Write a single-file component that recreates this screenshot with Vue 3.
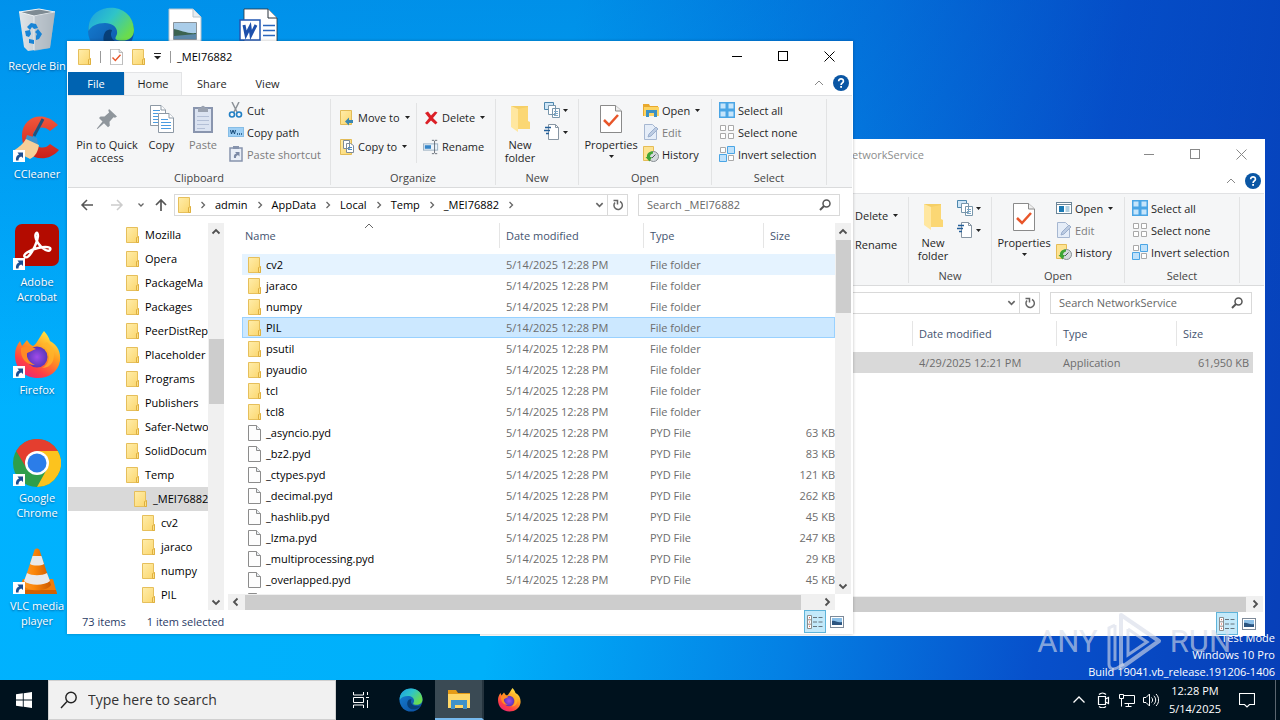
<script setup>
const shortcuts = [
  { icon: 'bin', label: 'Recycle Bin', row: 1, col: 1 },
  { icon: 'edge', label: '', row: 1, col: 2 },
  { icon: 'picture', label: '', row: 1, col: 3 },
  { icon: 'word', label: '', row: 1, col: 4 },
  { icon: 'ccleaner', label: 'CCleaner', row: 2, col: 1, link: true },
  { icon: 'acrobat', label: 'Adobe Acrobat', row: 3, col: 1, link: true },
  { icon: 'firefox', label: 'Firefox', row: 4, col: 1, link: true },
  { icon: 'chrome', label: 'Google Chrome', row: 5, col: 1, link: true },
  { icon: 'vlc', label: 'VLC media player', row: 6, col: 1, link: true },
]

const tree = [
  ['Mozilla', 0], ['Opera', 0], ['PackageMa', 0], ['Packages', 0],
  ['PeerDistRep', 0], ['Placeholder', 0], ['Programs', 0], ['Publishers', 0],
  ['Safer-Netwo', 0], ['SolidDocum', 0], ['Temp', 0], ['_MEI76882', 1],
  ['cv2', 2], ['jaraco', 2], ['numpy', 2], ['PIL', 2],
]

const stamp = '5/14/2025 12:28 PM'
const folders = ['cv2', 'jaraco', 'numpy', 'PIL', 'psutil', 'pyaudio', 'tcl', 'tcl8']
  .map((name) => ({ name, date: stamp, type: 'File folder', size: '', icon: 'folder' }))
const files = [
  ['_asyncio.pyd', 63], ['_bz2.pyd', 83], ['_ctypes.pyd', 121], ['_decimal.pyd', 262],
  ['_hashlib.pyd', 45], ['_lzma.pyd', 247], ['_multiprocessing.pyd', 29], ['_overlapped.pyd', 45],
].map(([name, kb]) => ({ name, date: stamp, type: 'PYD File', size: kb + ' KB', icon: 'file' }))

const windows = [
  {
    id: 'network', active: false, title: 'NetworkService', crumbs: [],
    rows: [{ name: '', date: '4/29/2025 12:21 PM', type: 'Application', size: '61,950 KB', icon: '', state: 'dim' }],
  },
  {
    id: 'mei', active: true, title: '_MEI76882',
    crumbs: ['admin', 'AppData', 'Local', 'Temp', '_MEI76882'],
    rows: [
      ...folders.map((f) => ({ ...f, state: f.name === 'cv2' ? 'hover' : f.name === 'PIL' ? 'picked' : '' })),
      ...files,
      { name: '', date: '', type: '', size: '', icon: 'file' },
    ],
  },
]
</script>

<template>
  <svg class="sprite" aria-hidden="true">
    <defs>
      <linearGradient id="gFolder" x1="0" x2="1" y1="0" y2="1">
        <stop offset="0" stop-color="#ffedab" /><stop offset="1" stop-color="#fbd66c" />
      </linearGradient>
      <linearGradient id="gEdgeA" x1="0" x2="1" y1="0" y2="0.6">
        <stop offset="0" stop-color="#1b9de2" /><stop offset="0.5" stop-color="#2fc4c8" /><stop offset="1" stop-color="#6bdc4c" />
      </linearGradient>
      <linearGradient id="gEdgeB" x1="0" x2="1" y1="0" y2="1">
        <stop offset="0" stop-color="#1583d8" /><stop offset="1" stop-color="#0c4a9a" />
      </linearGradient>
      <linearGradient id="gFox" x1="0.8" x2="0.2" y1="0" y2="1">
        <stop offset="0" stop-color="#fff04a" /><stop offset="0.4" stop-color="#ff9a1f" /><stop offset="0.75" stop-color="#ff3f45" /><stop offset="1" stop-color="#e6237d" />
      </linearGradient>
      <radialGradient id="gGlobe"><stop offset="0" stop-color="#a04bea" /><stop offset="1" stop-color="#5a36b8" /></radialGradient>
      <linearGradient id="gBin" x1="0" x2="1"><stop offset="0" stop-color="#dfe5e9" /><stop offset="0.6" stop-color="#c4ccd2" /><stop offset="1" stop-color="#97a3ac" /></linearGradient>
      <linearGradient id="gCone" x1="0" x2="1"><stop offset="0" stop-color="#ff9a2b" /><stop offset="0.4" stop-color="#fb8608" /><stop offset="1" stop-color="#cc5a00" /></linearGradient>
      <linearGradient id="gRed" x1="0" x2="0" y1="0" y2="1"><stop offset="0" stop-color="#f2573c" /><stop offset="1" stop-color="#c91f1a" /></linearGradient>
    </defs>

    <symbol id="folder" viewBox="0 0 13 16">
      <path d="M.5 .5H11.5V9l1 1v5.5H.5Z" fill="url(#gFolder)" stroke="#e6bf5b" />
      <path d="M12.5 9.500v6h-2v-5Z" fill="#fbe08b" stroke="#dfb03f" />
    </symbol>
    <symbol id="file" viewBox="0 0 13 16">
      <path d="M.5 .5H8.500L12.500 4.500V15.500H.5Z" fill="#fdfdfd" stroke="#8c8c8c" />
      <path d="M8.500 .5V4.500H12.500" fill="#e9eef2" stroke="#8c8c8c" />
    </symbol>
    <symbol id="checkdoc" viewBox="0 0 22 28">
      <path d="M.5 .5H15.500L21.500 6V27.500H.5Z" fill="#fff" stroke="#8a8a8a" />
      <path d="M15.500 .5V6H21.500" fill="#eee" stroke="#8a8a8a" />
      <path d="M4 15l5 5L18 10" fill="none" stroke="#e8562a" stroke-width="2.500" />
    </symbol>
    <symbol id="pin" viewBox="0 0 22 22">
      <path d="M13 1L21 8.500l-2 1.200-1.500-.4-4 4.500.3 4-1.800 1.400-4-4L1.500 21 .8 20.500 6.500 13.500 3 10l1.500-1.600 4 .2 4.600-4.200-.8-2Z" fill="#8f969c" />
    </symbol>
    <symbol id="copy" viewBox="0 0 24 28">
      <g fill="#fff" stroke="#8d99a5">
        <path d="M.5 .5H11L15.500 5V20.500H.5Z" /><path d="M11 .5V5h4.500" />
        <path d="M8.500 8.500H19L23.500 13V27.500H8.500Z" /><path d="M19 8.500V13h4.500" />
      </g>
      <path d="M3 5.500h7M3 8.500h5M3 11.500h5M3 14.500h5M3 17.500h5M11 14.500h7M11 17.500h10M11 20.500h10M11 23.500h10" stroke="#4b9ce0" />
    </symbol>
    <symbol id="paste" viewBox="0 0 20 28">
      <rect x="1" y="3" width="18" height="24" fill="#dbe3f1" stroke="#8995ae" stroke-width="2" />
      <path d="M5 3h3c0-3 4-3 4 0h3v4H5Z" fill="#9aa2b0" />
      <path d="M4 11.500h12M4 15.500h12M4 19.500h12M4 23.500h8" stroke="#b3bfd6" />
    </symbol>
    <symbol id="cut" viewBox="0 0 16 16">
      <path d="M4 0l5 10M11 0L6 10" stroke="#8c9298" stroke-width="1.500" />
      <ellipse cx="4" cy="12.500" rx="2.500" ry="2.500" fill="none" stroke="#217fc4" stroke-width="1.600" />
      <ellipse cx="11" cy="12.500" rx="2.500" ry="2.500" fill="none" stroke="#217fc4" stroke-width="1.600" />
    </symbol>
    <symbol id="path" viewBox="0 0 16 16">
      <rect x=".5" y="3.500" width="15" height="9" fill="#9fd0f5" stroke="#86bde6" />
      <path d="M2.500 6l1 4 1.500-4 1.500 4 1-4" fill="none" stroke="#174b79" />
      <path d="M9 10h1M11 10h1M13 10h1" stroke="#174b79" stroke-width="1.500" />
    </symbol>
    <symbol id="shortcut" viewBox="0 0 16 16">
      <rect x="2" y="2" width="12" height="13" fill="#e9eef7" stroke="#8794ad" stroke-width="1.500" />
      <rect x="5" y="0" width="6" height="3" fill="#8794ad" />
      <path d="M6 12c-.5-3 .5-4 2.500-4.500L7 6h4.500v4.500L10 9c-1.500 .5-2 1-2 3Z" fill="#7a88a5" />
    </symbol>
    <symbol id="move" viewBox="0 0 16 18">
      <path d="M1.500 1.500H12.500V15.500H1.500Z" fill="url(#gFolder)" stroke="#e2bb57" />
      <path d="M6 12.500l4-4v2.500h4v3h-4v2.500Z" fill="#3b87b0" />
    </symbol>
    <symbol id="copyto" viewBox="0 0 16 18">
      <path d="M1.500 1.500H12.500V16.500H1.500Z" fill="url(#gFolder)" stroke="#e2bb57" />
      <path d="M4.500 2.500h6v8h-6ZM7.500 5.500h4l3 2v7h-7Z" fill="#fff" stroke="#7f8c99" />
      <path d="M9 9.500h4M9 11.500h4" stroke="#4b8bc4" />
    </symbol>
    <symbol id="delete" viewBox="0 0 16 16">
      <path d="M2 3l3-1.500 3 4L12 1.500l2.500 1L10 8l4.500 4.500-2 2L8 10.500l-4 4-2-1.500L6 8Z" fill="#db1f26" />
    </symbol>
    <symbol id="rename" viewBox="0 0 18 16">
      <rect x=".5" y="4.500" width="16" height="7" fill="#eaf3fb" stroke="#94aabd" />
      <rect x="2" y="6" width="7" height="4" fill="#3585c8" />
      <path d="M10 .5h2.500M13.500 .5H16M13 1v14M10 15.500h2.500M13.500 15.500H16" stroke="#5d6670" />
    </symbol>
    <symbol id="bigfolder" viewBox="0 0 22 28">
      <path d="M2 1H19V21H2Z" fill="#f5cf66" />
      <path d="M2 1L9 4V27L2 22Z" fill="#ffe7a0" />
      <path d="M9 4l10-2v14l2 1v7H9Z" fill="#fbd774" />
    </symbol>
    <symbol id="newitem" viewBox="0 0 16 16">
      <path d="M.5 .5h9v7h-9Z" fill="#cfe6f7" stroke="#4d87ad" />
      <path d="M4.500 3.500h7v9h-7ZM8.500 6.500h7v9h-7Z" fill="#fff" stroke="#7896ab" />
      <path d="M10 9.500h4M10 11.500h4M10 13.500h4" stroke="#7ba7c7" />
    </symbol>
    <symbol id="easy" viewBox="0 0 16 16">
      <path d="M4.500 .5h7l3 3v12h-10Z" fill="#fff" stroke="#8896a3" />
      <path d="M11.500 .5v3h3" fill="none" stroke="#8896a3" />
      <path d="M1 3.500h6M0 6.500h6M2 9.500h3" stroke="#245f99" stroke-width="1.500" />
    </symbol>
    <symbol id="openfolder" viewBox="0 0 16 16">
      <path d="M0 2h6l1 2h8v10H0Z" fill="#e9a92e" /><path d="M1 5h15v9H1Z" fill="#fcd462" />
      <path d="M3 15V8h11v7h-3v-4H6v4Z" fill="#3c91c4" />
    </symbol>
    <symbol id="openapp" viewBox="0 0 16 16">
      <rect x=".5" y="2.500" width="15" height="11" fill="#fff" stroke="#6c8698" />
      <path d="M1 4.500h14" stroke="#6c8698" /><rect x="3" y="6" width="5" height="6" fill="#1c7ab4" />
      <path d="M9.500 7h4M9.500 9h4M9.500 11h4" stroke="#629fc3" />
    </symbol>
    <symbol id="edit" viewBox="0 0 16 16">
      <path d="M1.500 .5h8l4 4v11h-12Z" fill="#e5edf8" stroke="#a6b7d1" />
      <path d="M5 13l1-3 7-7 2 2-7 7Z" fill="#bdcce2" stroke="#9bafcd" />
    </symbol>
    <symbol id="history" viewBox="0 0 16 16">
      <path d="M.5 .5h10v14H.5Z" fill="#fde392" stroke="#e5bc57" />
      <circle cx="10.500" cy="10.500" r="5" fill="#d5dadd" stroke="#868d92" />
      <path d="M9 12l3.500-3.500" fill="none" stroke="#50595e" />
      <path d="M10 5.500C6 5 3.500 8 4 11L2.500 11 6.500 15.500 9 11H7c0-2 1-3 3-3.500Z" fill="#3fa535" />
    </symbol>
    <symbol id="selall" viewBox="0 0 16 16">
      <path d="M0 0h16v16H0Z" fill="#4aa5e5" />
      <path d="M1.500 1.500h5v5h-5ZM9.500 1.500h5v5h-5ZM1.500 9.500h5v5h-5ZM9.500 9.500h5v5h-5Z" fill="#c6e5fb" />
    </symbol>
    <symbol id="selnone" viewBox="0 0 16 16">
      <path d="M1.500 1.500h5v5h-5ZM9.500 1.500h5v5h-5ZM1.500 9.500h5v5h-5ZM9.500 9.500h5v5h-5Z" fill="#fff" stroke="#a9a9a9" />
    </symbol>
    <symbol id="selinv" viewBox="0 0 16 16">
      <path d="M1.500 1.500h5v5h-5ZM9.500 9.500h5v5h-5Z" fill="#fff" stroke="#a9a9a9" />
      <path d="M8.500 .5h7v7h-7ZM.5 8.500h7v7h-7Z" fill="#bfe1fa" stroke="#4aa5e5" />
    </symbol>
    <symbol id="help" viewBox="0 0 16 16">
      <circle cx="8" cy="8" r="8" fill="#0a56a4" />
      <path d="M5.700 6.200c0-3.200 4.800-3 4.700 0 0 1.700-2.300 1.700-2.300 3.800" fill="none" stroke="#fff" stroke-width="1.700" />
      <rect x="7.200" y="11" width="1.800" height="1.800" fill="#fff" />
    </symbol>
    <symbol id="up" viewBox="0 0 10 10"><path d="M1.500 6.500L5 3l3.500 3.500" fill="none" stroke="currentColor" stroke-width="1.800" /></symbol>
    <symbol id="down" viewBox="0 0 10 10"><path d="M1.500 3.500L5 7l3.500-3.500" fill="none" stroke="currentColor" stroke-width="1.800" /></symbol>
    <symbol id="left" viewBox="0 0 10 10"><path d="M6.500 1.500L3 5l3.500 3.500" fill="none" stroke="currentColor" stroke-width="1.800" /></symbol>
    <symbol id="right" viewBox="0 0 10 10"><path d="M3.500 1.500L7 5 3.500 8.500" fill="none" stroke="currentColor" stroke-width="1.800" /></symbol>
    <symbol id="thin-up" viewBox="0 0 10 10"><path d="M1 7l4-4 4 4" fill="none" stroke="currentColor" /></symbol>
    <symbol id="crumb" viewBox="0 0 6 8"><path d="M1.500 1l3 3-3 3" fill="none" stroke="#666" stroke-width="1.300" /></symbol>
    <symbol id="caret" viewBox="0 0 5 3"><path d="M0 0h5L2.500 3Z" fill="#222" /></symbol>
    <symbol id="lens" viewBox="0 0 12 12">
      <circle cx="7.500" cy="4.500" r="3.500" fill="none" stroke="currentColor" stroke-width="1.500" /><path d="M5 7L1 11" stroke="currentColor" stroke-width="2" />
    </symbol>
    <symbol id="reload" viewBox="0 0 12 12">
      <path d="M8 2.500A4.200 4.200 0 1 1 3 3.500" fill="none" stroke="#666" stroke-width="1.500" /><path d="M1.500 1.500h4v4" fill="none" stroke="#666" stroke-width="1.500" />
    </symbol>
    <symbol id="details" viewBox="0 0 16 14">
      <path d="M.5 .5h4v13h-4ZM.5 4.800h4M.5 9.200h4" fill="#fff" stroke="#8c8c8c" />
      <path d="M2 2.700h1M2 7h1M2 11.300h1" stroke="#d4533a" />
      <path d="M6 2.500h4M6 7h4M6 11.500h4M11.500 2.500h4M11.500 7h4M11.500 11.500h4" stroke="#66757e" />
    </symbol>
    <symbol id="thumbs" viewBox="0 0 14 12">
      <rect x=".5" y=".5" width="13" height="11" fill="#fff" stroke="#7d8a99" />
      <rect x="2" y="2" width="10" height="7" fill="#8cc0e8" /><path d="M2 5c3-1 5 2 10 1v3H2Z" fill="#2c5580" />
    </symbol>

    <symbol id="bin" viewBox="0 0 48 48">
      <path d="M6 5l20-3 16 3-5 36-22 3-4-4Z" fill="url(#gBin)" />
      <path d="M6 5l20-3 16 3-21 4Z" fill="#7e8b93" stroke="#eef3f6" />
      <path d="M21 9l21-4-5 36-16 3Z" fill="#b3bec6" opacity=".7" /><path d="M21 9v34" stroke="#e7edf1" />
      <g fill="#1784d6"><path d="M14 20l4-4 5 1 2 4-4 1-2-2-2 3ZM12 24l5-1 1 4-2 3-3-1ZM16 32l5 1v4l-5-1ZM25 22l4 5-3 5-3 1v-4l1-2-2-2Z" /></g>
    </symbol>
    <symbol id="edge" viewBox="0 0 48 48">
      <circle cx="24" cy="24" r="23" fill="url(#gEdgeB)" />
      <path d="M1.500 20C4-6 46-6 47 23c0 9-8 12-17 10-3-1-1-3 0-6 1-7-5-11-12-11-8 0-14 3-16.500 8Z" fill="url(#gEdgeA)" />
      <path d="M19 24c-7 9 1 22 15 18 4-1 7-4 9-7-7 3-18 1-19-7-.3-2 .7-3 1-5-2-1-4-.5-6 1Z" fill="#073f78" />
    </symbol>
    <symbol id="picture" viewBox="0 0 48 48">
      <path d="M8 2h24l8 8v37H8Z" fill="#fff" stroke="#b8c4cc" /><path d="M32 2v8h8" fill="#e6ecf0" stroke="#b8c4cc" />
      <path d="M12.500 15.500h23v17h-23Z" fill="#aacde9" stroke="#8a9299" /><path d="M13 22c6 1 14 5 22 4v6H13Z" fill="#3c6350" /><path d="M13 29l22-2v5H13Z" fill="#5b87a8" />
    </symbol>
    <symbol id="word" viewBox="0 0 48 48">
      <path d="M9 2h24l9 9v36H9Z" fill="#fff" stroke="#27313b" stroke-width=".8" /><path d="M33 2v9h9" fill="#fff" stroke="#27313b" />
      <path d="M28 18.500h12M28 23.500h12M28 28.500h12" stroke="#2b66bd" stroke-width="1.500" />
      <rect x="5" y="13" width="20" height="20" fill="#fff" stroke="#2257b3" stroke-width="1.500" />
      <path d="M9 18l2 10 4-8 1 8 5-10" fill="none" stroke="#1d50ac" stroke-width="3" />
    </symbol>
    <symbol id="ccleaner" viewBox="0 0 48 48">
      <path d="M45 10C30-6 8 2 9 22c1 22 24 28 37 13l-9-6c-6 7-16 3-17-6-1-10 10-14 17-7Z" fill="url(#gRed)" />
      <path d="M30 4L21 21" stroke="#24517a" stroke-width="3" />
      <path d="M14 20l10 3 1 7-13-4Z" fill="#3e92cc" />
      <path d="M13 24l13 6c-1 6-3 11-9 14C11 41 6 37 0 36c6-4 10-7 13-12Z" fill="#f6cf99" />
    </symbol>
    <symbol id="acrobat" viewBox="0 0 48 48">
      <rect x="2" y="1" width="44" height="42" rx="7" fill="#b30b00" />
      <path d="M12 34c-3-2 4-7 13-9 8-2 14-1 12 2-2 3-11-3-14-11-2-6 2-9 2-3-1 8-9 24-13 21Z" fill="none" stroke="#fff" stroke-width="2.400" />
    </symbol>
    <symbol id="firefox" viewBox="0 0 48 48">
      <path d="M31 0c3 3 5 7 6 10 8 4 11 12 10 20-2 11-11 17-22 17C11 47 2 37 2 24c0-6 2-10 5-14l2 5 5-6c2 3 3 5 6 6 3-1 6-8 11-15Z" fill="url(#gFox)" />
      <circle cx="24" cy="26" r="10.500" fill="url(#gGlobe)" />
      <path d="M8 17c6-3 11-2 15 1-4 1-5 3-9 4-1 5 3 10 8 12-9 0-15-7-14-17Z" fill="#ff8a24" />
      <path d="M24 17c7-5 12 2 12 9 0 5-3 9-7 11 10 0 14-9 11-20l-6-6Z" fill="#ffb62b" opacity=".75" />
    </symbol>
    <symbol id="chrome" viewBox="0 0 48 48">
      <circle cx="24" cy="24" r="24" fill="#2e9e4b" />
      <path d="M3.200 12A24 24 0 0 1 44.800 12H24L14 30Z" fill="#e43e2f" />
      <path d="M44.800 12A24 24 0 0 1 24 48L34 30 24 12Z" fill="#fcc31e" />
      <circle cx="24" cy="24" r="12" fill="#fff" /><circle cx="24" cy="24" r="9.500" fill="#2b7de9" />
    </symbol>
    <symbol id="vlc" viewBox="0 0 48 48">
      <path d="M10 32H40l4 15H4Z" fill="#ef7d0b" /><path d="M4 47l1-4h38l1 4Z" fill="#d26104" />
      <path d="M21.500 3c1-2 4-2 5 0L38 38c-4 7-24 7-28 0Z" fill="url(#gCone)" />
      <path d="M19.500 9h9l2.500 8c-3 2-11 2-14 0ZM14 26c5 3 15 3 20 0l3 8c-6 5-20 5-26 0Z" fill="#e9e9e9" />
    </symbol>
    <symbol id="explorer" viewBox="0 0 24 22">
      <path d="M1 2h8l2 3h12v4H1Z" fill="#e59b16" /><path d="M1 6h22v14H1Z" fill="#ffd768" />
      <path d="M4 21v-9h16v9h-4v-4H8v4Z" fill="#3f92c9" />
    </symbol>
  </svg>

  <div class="screen">
    <main class="desktop">
      <div class="shortcuts">
        <a v-for="s in shortcuts" :key="s.icon" href="#" class="shortcut" :aria-label="s.label || s.icon" :style="{ gridRow: s.row, gridColumn: s.col }">
          <span class="picture">
            <svg class="art" aria-hidden="true"><use :href="'#' + s.icon" /></svg>
            <svg v-if="s.link" class="arrow-badge" viewBox="0 0 12 12" aria-hidden="true">
              <path d="M0 0h12v12H0Z" fill="#fff" /><path d="M3 10.500C2.500 7 4 5 6 4.500L4.500 2.500H10V8L8.300 6.500C6.500 7 5.500 8 5.500 10.500Z" fill="#1d4f91" />
            </svg>
          </span>
          <span class="caption">{{ s.label }}</span>
        </a>
      </div>

      <div class="build">
        <div>Test Mode</div>
        <div>Windows 10 Pro</div>
        <div>Build 19041.vb_release.191206-1406</div>
      </div>

      <section v-for="w in windows" :key="w.id" class="window" :class="[w.id, { inactive: !w.active }]" :aria-label="w.title">
        <header class="titlebar">
          <div v-if="w.active" class="quick">
            <svg class="i-folder"><use href="#folder" /></svg>
            <i class="bar"></i>
            <svg class="i-folder"><use href="#checkdoc" /></svg>
            <svg class="i-folder"><use href="#folder" /></svg>
            <svg class="custom" viewBox="0 0 7 7"><path d="M0 .5h7" stroke="#222" /><path d="M0 3h7L3.500 6.500Z" fill="#222" /></svg>
            <i class="bar"></i>
          </div>
          <h1 class="title">{{ w.title }}</h1>
          <div class="controls">
            <button aria-label="Minimize"><svg viewBox="0 0 11 11"><path d="M0 5.500h10" stroke="currentColor" /></svg></button>
            <button aria-label="Maximize"><svg viewBox="0 0 11 11"><rect x=".5" y=".5" width="9" height="9" fill="none" stroke="currentColor" /></svg></button>
            <button aria-label="Close"><svg viewBox="0 0 11 11"><path d="M.5 .5l10 10M10.500 .5l-10 10" stroke="currentColor" /></svg></button>
          </div>
        </header>

        <nav class="tabs">
          <template v-if="w.active">
            <button class="tab file">File</button>
            <button class="tab home">Home</button>
            <button class="tab">Share</button>
            <button class="tab view-tab">View</button>
          </template>
          <span class="tab-tools">
            <svg class="fold"><use href="#thin-up" /></svg>
            <svg class="help"><use href="#help" /></svg>
          </span>
        </nav>

        <div class="ribbon">
          <div class="group">
            <div v-if="w.active" class="tools clip">
              <button class="big w70"><span class="pic"><svg class="s22"><use href="#pin" /></svg></span>Pin to Quick access</button>
              <button class="big w39"><span class="pic"><svg class="s28"><use href="#copy" /></svg></span>Copy</button>
              <button class="big w44 faded"><span class="pic"><svg class="s28"><use href="#paste" /></svg></span>Paste</button>
              <div class="stack">
                <button class="small"><svg><use href="#cut" /></svg>Cut</button>
                <button class="small"><svg><use href="#path" /></svg>Copy path</button>
                <button class="small faded"><svg><use href="#shortcut" /></svg>Paste shortcut</button>
              </div>
            </div>
            <div v-if="w.active" class="group-name">Clipboard</div>
          </div>
          <div class="group">
            <div class="tools organize">
              <div class="pair first">
                <template v-if="w.active">
                  <button class="small"><svg><use href="#move" /></svg>Move to<svg class="caret"><use href="#caret" /></svg></button>
                  <button class="small"><svg><use href="#copyto" /></svg>Copy to<svg class="caret"><use href="#caret" /></svg></button>
                </template>
              </div>
              <div class="pair">
                <button class="small"><svg><use href="#delete" /></svg>Delete<svg class="caret"><use href="#caret" /></svg></button>
                <button class="small"><svg><use href="#rename" /></svg>Rename</button>
              </div>
            </div>
            <div v-if="w.active" class="group-name">Organize</div>
          </div>
          <div class="group">
            <div class="tools">
              <button class="big w48"><span class="pic"><svg class="s28"><use href="#bigfolder" /></svg></span>New folder</button>
              <div class="stack">
                <button class="small tight" aria-label="New item"><svg><use href="#newitem" /></svg><svg class="caret"><use href="#caret" /></svg></button>
                <button class="small tight" aria-label="Easy access"><svg><use href="#easy" /></svg><svg class="caret"><use href="#caret" /></svg></button>
              </div>
            </div>
            <div class="group-name">New</div>
          </div>
          <div class="group">
            <div class="tools">
              <button class="big w62"><span class="pic"><svg class="s28"><use href="#checkdoc" /></svg></span>Properties<svg class="caret below"><use href="#caret" /></svg></button>
              <div class="stack">
                <button class="small"><svg><use :href="w.active ? '#openfolder' : '#openapp'" /></svg>Open<svg class="caret"><use href="#caret" /></svg></button>
                <button class="small faded"><svg><use href="#edit" /></svg>Edit</button>
                <button class="small"><svg><use href="#history" /></svg>History</button>
              </div>
            </div>
            <div class="group-name">Open</div>
          </div>
          <div class="group">
            <div class="tools select">
              <div class="stack">
                <button class="small"><svg><use href="#selall" /></svg>Select all</button>
                <button class="small"><svg><use href="#selnone" /></svg>Select none</button>
                <button class="small"><svg><use href="#selinv" /></svg>Invert selection</button>
              </div>
            </div>
            <div class="group-name">Select</div>
          </div>
        </div>

        <div class="addressbar">
          <div class="history">
            <template v-if="w.active">
              <svg viewBox="0 0 14 12"><path d="M13 6H2M7 1L2 6l5 5" fill="none" stroke="#555" stroke-width="1.500" /></svg>
              <svg viewBox="0 0 14 12"><path d="M1 6h11M7 1l5 5-5 5" fill="none" stroke="#ccc" stroke-width="1.500" /></svg>
              <svg class="tiny" viewBox="0 0 6 6"><path d="M.5 1.500L3 4l2.500-2.500" fill="none" stroke="#666" stroke-width="1.300" /></svg>
              <svg viewBox="0 0 14 12"><path d="M7 12V1M2 6l5-5 5 5" fill="none" stroke="#555" stroke-width="1.700" /></svg>
            </template>
          </div>
          <div class="address">
            <template v-if="w.active">
              <svg class="i-folder"><use href="#folder" /></svg>
              <svg class="crumb"><use href="#crumb" /></svg>
              <template v-for="c in w.crumbs" :key="c">
                <a href="#">{{ c }}</a><svg class="crumb"><use href="#crumb" /></svg>
              </template>
            </template>
            <svg class="drop"><use href="#down" /></svg>
            <button class="reload" aria-label="Refresh"><svg><use href="#reload" /></svg></button>
          </div>
          <div class="search">
            <input type="search" :placeholder="'Search ' + w.title" :aria-label="'Search ' + w.title" />
            <svg><use href="#lens" /></svg>
          </div>
        </div>

        <div class="body">
          <div class="tree-pane">
            <template v-if="w.active">
              <ul class="tree">
                <li v-for="[name, depth] in tree" :key="name" :class="{ current: depth === 1 }" :style="{ paddingLeft: 58 + depth * 8 + 'px' }">
                  <svg class="i-folder"><use href="#folder" /></svg>{{ name }}
                </li>
              </ul>
              <div class="vscroll">
                <svg><use href="#up" /></svg><i class="thumb tree-thumb"></i><svg class="end"><use href="#down" /></svg>
              </div>
            </template>
          </div>
          <div class="list-pane">
            <div class="list-top">
              <div class="list">
                <table>
                  <colgroup><col class="c-name" /><col class="c-date" /><col class="c-type" /><col /></colgroup>
                  <thead>
                    <tr>
                      <th class="name-head"><template v-if="w.active">Name<svg class="sort"><use href="#thin-up" /></svg></template></th>
                      <th><span>Date modified</span></th><th><span>Type</span></th><th><span>Size</span></th>
                    </tr>
                  </thead>
                  <tbody>
                    <tr v-for="(r, n) in w.rows" :key="n" :class="r.state">
                      <td class="name"><svg v-if="r.icon"><use :href="'#' + r.icon" /></svg>{{ r.name }}</td>
                      <td>{{ r.date }}</td><td>{{ r.type }}</td><td class="size">{{ r.size }}</td>
                    </tr>
                  </tbody>
                </table>
              </div>
              <div v-if="w.active" class="vscroll">
                <svg><use href="#up" /></svg><i class="thumb list-thumb"></i><svg class="end"><use href="#down" /></svg>
              </div>
            </div>
            <div class="hscroll">
              <svg><use href="#left" /></svg><i class="thumb"></i><svg class="end"><use href="#right" /></svg>
            </div>
          </div>
        </div>

        <footer class="status">
          <template v-if="w.active"><span>73 items</span><span>1 item selected</span></template>
          <div class="views">
            <button class="view on" aria-label="Details"><svg><use href="#details" /></svg></button>
            <button class="view" aria-label="Large icons"><svg class="thumbs"><use href="#thumbs" /></svg></button>
          </div>
        </footer>
      </section>

      <div class="watermark">
        <span>ANY</span>
        <svg viewBox="0 0 56 60" aria-hidden="true">
          <path d="M15 3L53 29 15 56Z" fill="none" stroke="currentColor" stroke-width="4" stroke-linejoin="round" />
          <path d="M22 17v26L41 30 22 17" fill="none" stroke="currentColor" stroke-width="3" />
          <path d="M9 13L3 16v36c0 5 4 6 8 4l7-4M9 13v36" fill="none" stroke="currentColor" stroke-width="3" />
        </svg>
        <span>RUN</span>
      </div>
    </main>

    <footer class="taskbar">
      <button class="start" aria-label="Start">
        <svg viewBox="0 0 16 16"><path d="M0 2.300L6.800 1.300V7.500H0ZM7.700 1.200L16 0V7.500H7.700ZM0 8.500H6.800V14.700L0 13.700ZM7.700 8.500H16V16L7.700 14.800Z" fill="#fff" /></svg>
      </button>
      <div class="task-search">
        <svg viewBox="0 0 18 18"><circle cx="11" cy="6.500" r="5.200" fill="none" stroke="#222" stroke-width="1.400" /><path d="M7 10.500L1 17" stroke="#222" stroke-width="1.400" /></svg>
        <input type="search" placeholder="Type here to search" aria-label="Type here to search" />
      </div>
      <button class="task" aria-label="Task view">
        <svg class="s16" viewBox="0 0 16 16"><path d="M.5 0v3h10V0M.5 16v-3h10v3M.5 5.500h10v5H.5ZM14.500 0v3M14.500 8v8M13 5.500h3" fill="none" stroke="#fff" /></svg>
      </button>
      <button class="task" aria-label="Edge"><svg class="s24"><use href="#edge" /></svg></button>
      <button class="task open" aria-label="File Explorer"><svg class="s24"><use href="#explorer" /></svg></button>
      <button class="task" aria-label="Firefox"><svg class="s24"><use href="#firefox" /></svg></button>
      <div class="tray">
        <svg viewBox="0 0 16 16"><path d="M2.500 10.500L8 5l5.500 5.500" fill="none" stroke="#fff" stroke-width="1.300" /></svg>
        <svg viewBox="0 0 16 16"><path d="M3.500 4.500h7v8h-7ZM10.500 7l3-1.500v6L10.500 10M4 2.500C6 .5 9 .5 11 2.500M4 14.500c2 1.500 5 1.500 7 0" fill="none" stroke="#fff" stroke-width="1.200" /></svg>
        <svg viewBox="0 0 16 16"><path d="M4.500 3.500h11v8H5.500M.5 2.500h4v4h-4ZM2.500 6.500v8M9.500 11.500v3M6.500 14.500h6" fill="none" stroke="#fff" /></svg>
        <svg viewBox="0 0 16 16"><path d="M.5 5.500h2.500L6.500 2v12L3 10.500H.5ZM8.500 5.500c1.500 1.500 1.500 3.500 0 5M10.800 3.800c2.500 2.500 2.500 6 0 8.500M13 2c3.500 3.500 3.500 8.500 0 12" fill="none" stroke="#fff" /></svg>
        <div class="clock">12:28 PM<br />5/14/2025</div>
        <svg class="note" viewBox="0 0 16 16"><path d="M.5 1.500h15v11H10.500L8 15 5.500 12.500H.5Z" fill="none" stroke="#fff" stroke-width="1.100" /></svg>
        <i class="peek"></i>
      </div>
    </footer>
  </div>
</template>

<style>
html, body { margin: 0; height: 100%; overflow: hidden; }
</style>

<style scoped>
* { box-sizing: border-box; }
svg { display: block; flex: none; }
button { font: inherit; color: inherit; background: none; border: 0; padding: 0; margin: 0; text-align: left; }
a { color: inherit; text-decoration: none; }
.sprite { position: absolute; width: 0; height: 0; }
.screen { height: 100vh; display: flex; flex-direction: column; overflow: hidden; font: 11px/15px "Open Sans", "Noto Sans", sans-serif; color: #1f1f1f; }
.desktop {
  position: relative; flex: 1; overflow: hidden;
  background:
    linear-gradient(180deg, rgba(0, 70, 190, 0.3), rgba(0, 110, 220, 0) 60%),
    linear-gradient(98deg, #00b2ff 0%, #00b0fa 42%, #0480e4 64%, #0750cb 82%, #073fb8 100%);
}
.shortcuts { display: grid; grid-template-columns: repeat(4, 74px); grid-auto-rows: 108px; }
.shortcut { display: flex; flex-direction: column; align-items: center; padding-top: 7px; color: #fff; }
.picture { position: relative; width: 48px; height: 48px; }
.art { width: 48px; height: 48px; }
.arrow-badge { position: absolute; left: 0; bottom: 1px; width: 12px; height: 12px; }
.caption { width: 66px; margin-top: 3px; text-align: center; text-shadow: 0 1px 2px rgba(0, 40, 90, 0.6); }
.build { position: absolute; right: 5px; bottom: 0; text-align: right; color: #fff; line-height: 17px; }

.window { position: absolute; display: flex; flex-direction: column; background: #fff; padding: 0 1px; }
.window.network { left: 480px; right: 15px; top: 139px; bottom: 44px; }
.window.mei { left: 67px; right: 427px; top: 41px; bottom: 46px; box-shadow: 0 0 3px rgba(0, 0, 0, 0.25); }

.titlebar { height: 31px; flex: none; display: flex; align-items: center; }
.quick { display: flex; align-items: center; gap: 9px; padding-left: 10px; }
.i-folder { width: 13px; height: 16px; }
.custom { width: 7px; height: 7px; }
.bar { width: 1px; height: 12px; background: #999; }
.title { margin: 0 0 0 6px; font-size: 11px; font-weight: 400; color: #000; }
.inactive .title { width: 437px; text-align: right; color: #8d8d8d; }
.controls { margin-left: auto; display: flex; color: #000; }
.inactive .controls { color: #888; }
.controls button { width: 46px; height: 30px; display: grid; place-items: center; }
.controls svg { width: 11px; height: 11px; }

.tabs { height: 24px; flex: none; display: flex; }
.tab { height: 24px; padding: 0 15px 1px; text-align: center; }
.tab.view-tab { padding-left: 14px; }
.tab.file { width: 56px; background: #0063b1; color: #fff; }
.tab.home { width: 58px; background: #f5f6f7; border: 1px solid #e3e4e6; border-bottom: 0; padding: 0 0 2px; }
.tab-tools { margin-left: auto; display: flex; align-items: center; gap: 9px; padding: 0 3px 2px 0; color: #888; }
.fold { width: 10px; height: 10px; }
.help { width: 16px; height: 16px; }

.ribbon { height: 93px; flex: none; display: grid; grid-template-columns: 263px 165px 83px 133px 115px 1fr; background: #f5f6f7; border-top: 1px solid #e1e2e4; border-bottom: 1px solid #dadbdc; padding: 3px 0 2px; margin-top: -1px; }
.group { border-right: 1px solid #e2e3e4; display: flex; flex-direction: column; }
.tools { flex: 1; display: flex; padding-left: 1px; }
.tools.clip { padding-left: 4px; }
.tools.select { padding-left: 7px; }
.group-name { height: 15px; text-align: center; color: #444; }
.big { text-align: center; line-height: 13px; display: flex; flex-direction: column; align-items: center; flex: none; }
.pic { height: 39px; display: grid; place-items: center; }
.w70 { width: 70px; } .w39 { width: 39px; } .w44 { width: 44px; } .w48 { width: 46px; } .w62 { width: 62px; }
.s22 { width: 22px; height: 22px; }
.s28 { width: 24px; height: 28px; }
.faded { color: #7c7c7c; }
.stack { display: flex; flex-direction: column; padding-left: 3px; }
.stack .small { height: 22px; }
.tools:not(.clip):not(.select) > .stack { padding-left: 1px; }
.tools.select > .stack { padding-left: 0; }
.small { display: flex; align-items: center; gap: 3px; white-space: nowrap; }
.small svg { width: 16px; height: 16px; }
.small .caret, .caret { width: 5px; height: 3px; }
.small .caret { margin-left: 2px; }
.small.tight .caret { margin-left: 0; }
.below { margin-top: 4px; }
.organize { padding: 4px 0 0 8px; }
.pair { display: flex; flex-direction: column; height: 60px; }
.pair .small { height: 29px; }
.pair.first { width: 78px; border-right: 1px solid #e2e3e4; margin-right: 6px; }
.pair.first .small svg:first-child { width: 16px; height: 18px; }

.addressbar { height: 35px; flex: none; display: flex; align-items: center; padding: 0 12px 2px 0; }
.history { width: 106px; flex: none; display: flex; align-items: center; gap: 14px; padding-left: 12px; }
.history svg { width: 14px; height: 12px; }
.history .tiny { width: 6px; height: 6px; margin: 0 -4px 0 0; }
.history svg:nth-child(2) { margin-left: 2px; }
.address { flex: 1; height: 22px; border: 1px solid #d9d9d9; display: flex; align-items: center; gap: 9px; padding-left: 3px; color: #000; }
.crumb { width: 6px; height: 8px; }
.drop { width: 9px; height: 9px; margin-left: auto; color: #666; }
.reload { width: 20px; height: 20px; border-left: 1px solid #d9d9d9; display: grid; place-items: center; margin-left: -6px; }
.reload svg { width: 12px; height: 12px; }
.search { width: 202px; height: 22px; margin-left: 10px; border: 1px solid #d9d9d9; display: flex; align-items: center; padding: 0 8px; color: #555; }
.search input { flex: 1; min-width: 0; border: 0; padding: 0; outline: 0; background: none; font: inherit; }
input::placeholder { color: #666; opacity: 1; }
.search svg { width: 12px; height: 12px; }

.body { flex: 1; min-height: 0; display: flex; padding-right: 1px; }
.tree-pane { width: 156px; flex: none; display: flex; overflow: hidden; }
.tree { list-style: none; margin: 0; padding: 0; width: 140px; overflow: hidden; color: #000; }
.tree li { height: 24px; display: flex; align-items: center; gap: 6px; padding-bottom: 1px; white-space: nowrap; overflow: hidden; }
.tree li.current { background: #d9d9d9; }
.vscroll { width: 16px; flex: none; background: #f0f0f0; display: flex; flex-direction: column; align-items: center; padding: 4px 0 3px; color: #505050; }
.vscroll svg, .hscroll svg { width: 10px; height: 10px; }
.vscroll .end { margin-top: auto; }
.thumb { background: #cdcdcd; display: block; }
.vscroll .thumb { width: 15px; }
.tree-thumb { height: 17%; margin-top: 102px; }
.list-thumb { height: 20%; margin-top: 3px; }
.list-pane { flex: 1; min-width: 0; display: flex; flex-direction: column; padding-left: 4px; }
.list-top { flex: 1; min-height: 0; display: flex; }
.list { flex: 1; min-width: 0; overflow: hidden; padding-left: 14px; }
.inactive .list { padding-right: 10px; }
table { width: 100%; table-layout: fixed; border-collapse: collapse; }
.c-name { width: 257px; } .c-date { width: 144px; } .c-type { width: 120px; }
th { height: 31px; padding: 0 0 6px; text-align: left; font-weight: 400; color: #44546f; }
th span { display: block; height: 25px; line-height: 25px; border-left: 1px solid #e5e5e5; padding-left: 6px; }
.name-head { position: relative; padding-left: 3px; }
.sort { position: absolute; left: 122px; top: -2px; width: 10px; height: 10px; color: #666; }
td { height: 21px; padding: 0 0 0 7px; color: #6d6d6d; white-space: nowrap; overflow: hidden; line-height: 15px; }
td.name { color: #000; display: flex; align-items: center; gap: 5px; padding-left: 6px; }
td.name svg { width: 13px; height: 16px; }
td.size { text-align: right; padding: 0; }
.inactive td.size { padding-right: 4px; }
tr.hover { background: #e5f3ff; }
tr.picked { background: #cce8ff; box-shadow: inset 0 0 0 1px #99d1ff; }
tr.dim { background: #d9d9d9; }
.hscroll { height: 16px; flex: none; background: #f0f0f0; display: flex; align-items: center; padding: 0 3px; margin-right: 16px; color: #505050; }
.hscroll .thumb { height: 15px; flex: 1; margin: 0 21px 0 4px; }
.inactive .hscroll { margin-right: 0; }
.inactive .hscroll .thumb { margin-right: 4px; }

.status { height: 24px; flex: none; display: flex; align-items: center; gap: 21px; padding: 0 8px 1px 14px; color: #2a3b66; }
.views { margin-left: auto; display: flex; align-items: center; gap: 4px; }
.view svg { width: 16px; height: 14px; }
.view .thumbs { width: 14px; height: 12px; }
.view.on { width: 22px; height: 23px; display: grid; place-items: center; border: 1px solid #5fb4da; background: #c3e9fa; }

.watermark { position: absolute; right: 49px; bottom: 8px; display: flex; align-items: center; gap: 8px; color: rgba(214, 220, 232, 0.62); font: 31px/60px Roboto, "Liberation Sans", sans-serif; pointer-events: none; }
.watermark svg { width: 56px; height: 60px; }

.taskbar { height: 40px; flex: none; display: flex; background: #00121e; color: #fff; }
.start { width: 48px; display: grid; place-items: center; }
.start svg, .s16 { width: 16px; height: 16px; }
.task-search { width: 288px; background: #f1f1f1; border: 1px solid #d0d0d0; display: flex; align-items: center; gap: 10px; padding-left: 11px; }
.task-search svg { width: 18px; height: 18px; }
.task-search input { flex: 1; min-width: 0; border: 0; padding: 0; outline: 0; background: none; font: 14px/20px "Open Sans", "Noto Sans", sans-serif; }
.task-search input::placeholder { color: #333; }
.task { width: 49px; display: grid; place-items: center; }
.task-search + .task { width: 50px; }
.task.open { background: #3a4a54; border-bottom: 2px solid #76b9ed; border-right: 2px solid #25343e; }
.s24 { width: 24px; height: 24px; }
.tray { margin-left: auto; display: flex; align-items: center; gap: 8px; }
.tray svg { width: 16px; height: 16px; }
.clock { width: 56px; text-align: center; line-height: 18px; }
.tray .note { margin-left: 8px; }
.peek { width: 5px; height: 40px; border-left: 1px solid #5b6670; margin-left: 12px; }
</style>
